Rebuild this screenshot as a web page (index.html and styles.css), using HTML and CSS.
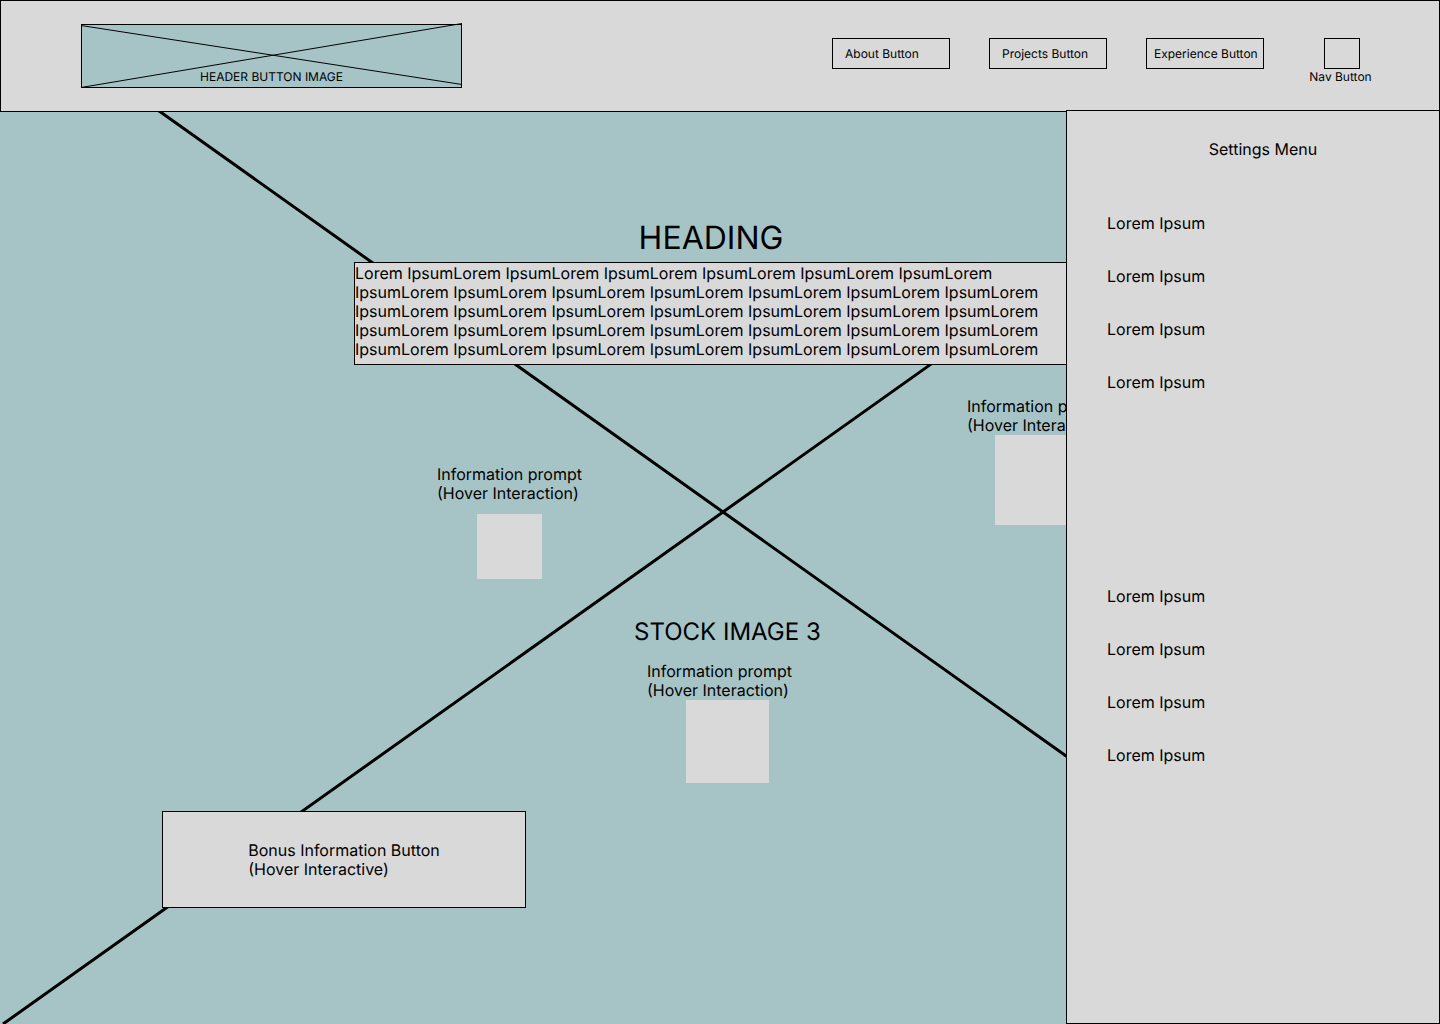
FILE: index.html
```html
<!DOCTYPE html>
<html lang="en">
<head>
  <meta charset="utf-8">
  <meta name="viewport" content="width=device-width, initial-scale=1">
  <title>Stock Image 3</title>
  <link rel="stylesheet" href="styles.css">
</head>
<body>
  <header class="header">
    <button class="brand" type="button">
      <svg class="brand-cross" viewBox="0 0 381 64" preserveAspectRatio="none" aria-hidden="true">
        <path d="M0 1.5 L381 60.5 M0 63.5 L381 -0.5"/>
      </svg>
      <span class="brand-label">HEADER BUTTON IMAGE</span>
    </button>
    <nav class="nav">
      <button class="nav-button" type="button">About Button</button>
      <button class="nav-button" type="button">Projects Button</button>
      <button class="nav-button nav-button-wide" type="button">Experience Button</button>
      <button class="nav-toggle" type="button">
        <span class="nav-toggle-box"></span>
        <span class="nav-toggle-label">Nav Button</span>
      </button>
    </nav>
  </header>

  <main class="stage">
    <svg class="stage-cross" viewBox="0 112 1440 912" preserveAspectRatio="none" aria-hidden="true">
      <path d="M3 0 L1443 1024 M3 1024 L1443 0"/>
    </svg>

    <section class="intro">
      <h1 class="intro-title">HEADING</h1>
      <p class="intro-text">Lorem IpsumLorem IpsumLorem IpsumLorem IpsumLorem IpsumLorem IpsumLorem IpsumLorem IpsumLorem IpsumLorem IpsumLorem IpsumLorem IpsumLorem IpsumLorem IpsumLorem IpsumLorem IpsumLorem IpsumLorem IpsumLorem IpsumLorem IpsumLorem IpsumLorem IpsumLorem IpsumLorem IpsumLorem IpsumLorem IpsumLorem IpsumLorem IpsumLorem IpsumLorem IpsumLorem IpsumLorem IpsumLorem IpsumLorem IpsumLorem</p>
    </section>

    <h2 class="caption">STOCK IMAGE 3</h2>

    <button class="hotspot hotspot-left" type="button">
      <span>Information prompt<br>(Hover Interaction)</span>
      <span class="hotspot-box"></span>
    </button>
    <button class="hotspot hotspot-right" type="button">
      <span>Information prompt<br>(Hover Interaction)</span>
      <span class="hotspot-box"></span>
    </button>
    <button class="hotspot hotspot-center" type="button">
      <span>Information prompt<br>(Hover Interaction)</span>
      <span class="hotspot-box"></span>
    </button>

    <button class="bonus" type="button"><span class="bonus-label">Bonus Information Button<br>(Hover Interactive)</span></button>

    <aside class="settings">
      <h2 class="settings-title">Settings Menu</h2>
      <ul class="settings-list">
        <li><a href="#">Lorem Ipsum</a></li>
        <li><a href="#">Lorem Ipsum</a></li>
        <li><a href="#">Lorem Ipsum</a></li>
        <li><a href="#">Lorem Ipsum</a></li>
      </ul>
      <ul class="settings-list settings-list-lower">
        <li><a href="#">Lorem Ipsum</a></li>
        <li><a href="#">Lorem Ipsum</a></li>
        <li><a href="#">Lorem Ipsum</a></li>
        <li><a href="#">Lorem Ipsum</a></li>
      </ul>
    </aside>
  </main>
</body>
</html>
```
FILE: styles.css
```css
:root {
  --panel: #d9d9d9;
  --image: #a6c4c6;
  --line: #000;
}

* {
  box-sizing: border-box;
}

body {
  display: flex;
  flex-direction: column;
  min-height: 100vh;
  margin: 0;
  background: var(--image);
  color: #000;
  font: 16px/19px Inter, "Liberation Sans", sans-serif;
  text-rendering: geometricPrecision;
}

button {
  padding: 0;
  border: 0;
  border-radius: 0;
  background: none;
  color: inherit;
  font: inherit;
  text-align: left;
  text-rendering: inherit;
  cursor: pointer;
}

h1,
h2,
p,
ul {
  margin: 0;
  padding: 0;
  font-weight: 400;
}

/* Header */

.header {
  display: flex;
  justify-content: space-between;
  align-items: flex-start;
  min-height: 112px;
  padding: 23px 58px 23px 80px;
  border: 1px solid var(--line);
  background: var(--panel);
  font-size: 12px;
  line-height: 15px;
}

.brand {
  position: relative;
  display: flex;
  justify-content: center;
  align-items: flex-end;
  width: 381px;
  height: 64px;
  padding-bottom: 3px;
  border: 1px solid var(--line);
  background: var(--image);
}

.brand-cross {
  position: absolute;
  inset: -1px;
  width: 381px;
  height: 64px;
  overflow: visible;
  fill: none;
  stroke: var(--line);
  stroke-width: 1;
}

.brand-label {
  position: relative;
}

.nav {
  display: flex;
  align-items: flex-start;
  gap: 39px;
  padding-top: 14px;
}

.nav-button {
  width: 118px;
  height: 31px;
  padding-left: 12px;
  border: 1px solid var(--line);
  white-space: nowrap;
}

.nav-button-wide {
  padding-left: 7px;
}

.nav-toggle {
  display: flex;
  flex-direction: column;
  align-items: center;
  width: 78px;
}

.nav-toggle-box {
  width: 36px;
  height: 31px;
  border: 1px solid var(--line);
}

.nav-toggle-label {
  padding-right: 3px;
}

/* Image stage */

.stage {
  position: relative;
  flex: 1;
  min-height: 820px;
  padding: 106px 18px 0 0;
}

.stage-cross {
  position: absolute;
  inset: 0;
  width: 100%;
  height: 100%;
  fill: none;
  stroke: var(--line);
  stroke-width: 3;
}

.intro {
  position: relative;
  display: flex;
  flex-direction: column;
  gap: 5px;
  max-width: 714px;
  margin: 0 auto;
}

.intro-title {
  font-size: 32px;
  line-height: 39px;
  text-align: center;
}

.intro-text {
  padding: 1px 0 5px;
  border: 1px solid var(--line);
  background: var(--panel);
}

.caption {
  position: absolute;
  top: 505px;
  left: calc(50% - 86px);
  font-size: 24px;
  line-height: 29px;
  white-space: nowrap;
}

/* Prompts pinned on the image */

.hotspot {
  position: absolute;
  display: flex;
  flex-direction: column;
  white-space: nowrap;
}

.hotspot-box {
  background: var(--panel);
}

.hotspot-left {
  top: 353px;
  left: calc(50% - 283px);
  gap: 11px;
}

.hotspot-left .hotspot-box {
  width: 65px;
  height: 65px;
  margin-left: 40px;
}

.hotspot-right {
  top: 285px;
  left: calc(50% + 247px);
}

.hotspot-right .hotspot-box {
  width: 90px;
  height: 90px;
  margin-left: 28px;
}

.hotspot-center {
  top: 550px;
  left: calc(50% - 73px);
}

.hotspot-center .hotspot-box {
  width: 83px;
  height: 83px;
  margin-left: 39px;
}

.bonus {
  position: absolute;
  top: 699px;
  left: 162px;
  display: flex;
  justify-content: center;
  align-items: center;
  width: 364px;
  height: 97px;
  border: 1px solid var(--line);
  background: var(--panel);
}

/* Settings menu, open over the stage */

.settings {
  position: absolute;
  top: -2px;
  right: 0;
  bottom: 0;
  width: 374px;
  padding: 29px 0 29px 40px;
  border: 1px solid var(--line);
  background: var(--panel);
}

.settings-title {
  padding-right: 20px;
  font-size: 16px;
  line-height: 19px;
  text-align: center;
}

.settings-list {
  display: flex;
  flex-direction: column;
  gap: 34px;
  margin-top: 55px;
  list-style: none;
}

.settings-list-lower {
  margin-top: 195px;
}

.settings-list a {
  color: inherit;
  text-decoration: none;
}
```
